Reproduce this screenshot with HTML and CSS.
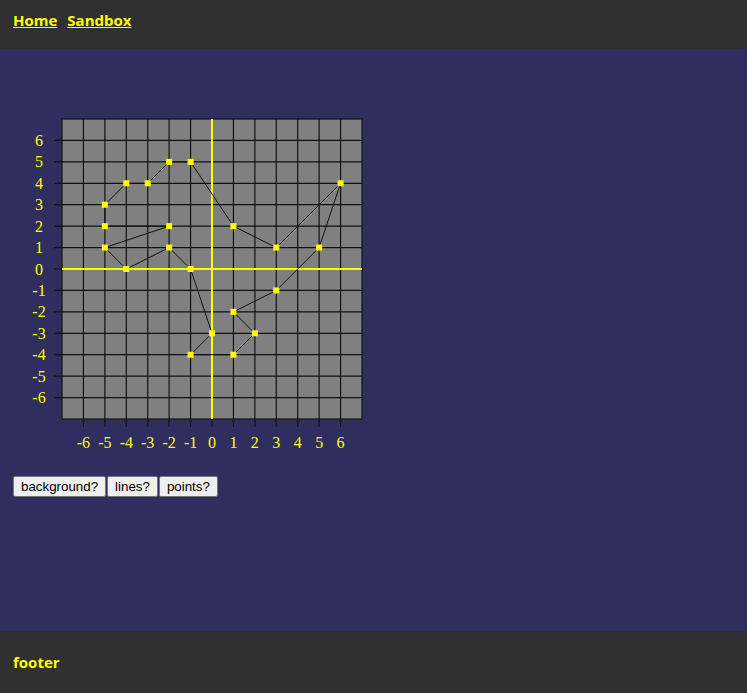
FILE: index.html
```html
<!DOCTYPE html>
<html>
<head>
<meta charset="utf-8">
<link rel="stylesheet" href="styles.css">
</head>
<body>
<header class="topbar">
  <a class="navlink" href="#">Home</a>
  <a class="navlink" href="#">Sandbox</a>
</header>
<main class="content">
  <svg class="plot" width="360" height="360" viewBox="0 0 360 360" xmlns="http://www.w3.org/2000/svg">
    <rect x="49" y="19" width="300" height="300" fill="#808080"/>
    <g class="grid" stroke="#111" stroke-width="1.2" fill="none">
      <line x1="70.43" y1="19" x2="70.43" y2="327"/>
      <line x1="91.86" y1="19" x2="91.86" y2="327"/>
      <line x1="113.29" y1="19" x2="113.29" y2="327"/>
      <line x1="134.71" y1="19" x2="134.71" y2="327"/>
      <line x1="156.14" y1="19" x2="156.14" y2="327"/>
      <line x1="177.57" y1="19" x2="177.57" y2="327"/>
      <line x1="199" y1="19" x2="199" y2="327"/>
      <line x1="220.43" y1="19" x2="220.43" y2="327"/>
      <line x1="241.86" y1="19" x2="241.86" y2="327"/>
      <line x1="263.29" y1="19" x2="263.29" y2="327"/>
      <line x1="284.71" y1="19" x2="284.71" y2="327"/>
      <line x1="306.14" y1="19" x2="306.14" y2="327"/>
      <line x1="327.57" y1="19" x2="327.57" y2="327"/>
      <line x1="41" y1="40.43" x2="349" y2="40.43"/>
      <line x1="41" y1="61.86" x2="349" y2="61.86"/>
      <line x1="41" y1="83.29" x2="349" y2="83.29"/>
      <line x1="41" y1="104.71" x2="349" y2="104.71"/>
      <line x1="41" y1="126.14" x2="349" y2="126.14"/>
      <line x1="41" y1="147.57" x2="349" y2="147.57"/>
      <line x1="41" y1="169" x2="349" y2="169"/>
      <line x1="41" y1="190.43" x2="349" y2="190.43"/>
      <line x1="41" y1="211.86" x2="349" y2="211.86"/>
      <line x1="41" y1="233.29" x2="349" y2="233.29"/>
      <line x1="41" y1="254.71" x2="349" y2="254.71"/>
      <line x1="41" y1="276.14" x2="349" y2="276.14"/>
      <line x1="41" y1="297.57" x2="349" y2="297.57"/>
      <rect x="49" y="19" width="300" height="300"/>
    </g>
    <g stroke="#ffff00" stroke-width="2">
      <line x1="199" y1="19" x2="199" y2="319"/>
      <line x1="49" y1="169" x2="349" y2="169"/>
    </g>
    <g class="labels" fill="#ffff00" text-anchor="middle" dominant-baseline="central">
      <text x="26" y="40.43">6</text>
      <text x="26" y="61.86">5</text>
      <text x="26" y="83.29">4</text>
      <text x="26" y="104.71">3</text>
      <text x="26" y="126.14">2</text>
      <text x="26" y="147.57">1</text>
      <text x="26" y="169">0</text>
      <text x="26" y="190.43">-1</text>
      <text x="26" y="211.86">-2</text>
      <text x="26" y="233.29">-3</text>
      <text x="26" y="254.71">-4</text>
      <text x="26" y="276.14">-5</text>
      <text x="26" y="297.57">-6</text>
    </g>
    <g class="labels" fill="#ffff00" text-anchor="middle">
      <text x="70.43" y="348">-6</text>
      <text x="91.86" y="348">-5</text>
      <text x="113.29" y="348">-4</text>
      <text x="134.71" y="348">-3</text>
      <text x="156.14" y="348">-2</text>
      <text x="177.57" y="348">-1</text>
      <text x="199" y="348">0</text>
      <text x="220.43" y="348">1</text>
      <text x="241.86" y="348">2</text>
      <text x="263.29" y="348">3</text>
      <text x="284.71" y="348">4</text>
      <text x="306.14" y="348">5</text>
      <text x="327.57" y="348">6</text>
    </g>
    <polygon fill="none" stroke="#111" stroke-width="1" points="91.86,104.71 113.29,83.29 134.71,83.29 156.14,61.86 177.57,61.86 220.43,126.14 263.29,147.57 327.57,83.29 306.14,147.57 263.29,190.43 220.43,211.86 241.86,233.29 220.43,254.71 177.57,254.71 199,233.29 177.57,169 156.14,147.57 113.29,169 91.86,147.57 156.14,126.14 91.86,126.14"/>
    <g fill="#ffff00">
      <rect x="88.86" y="101.71" width="6" height="6"/>
      <rect x="110.29" y="80.29" width="6" height="6"/>
      <rect x="131.71" y="80.29" width="6" height="6"/>
      <rect x="153.14" y="58.86" width="6" height="6"/>
      <rect x="174.57" y="58.86" width="6" height="6"/>
      <rect x="217.43" y="123.14" width="6" height="6"/>
      <rect x="260.29" y="144.57" width="6" height="6"/>
      <rect x="324.57" y="80.29" width="6" height="6"/>
      <rect x="303.14" y="144.57" width="6" height="6"/>
      <rect x="260.29" y="187.43" width="6" height="6"/>
      <rect x="217.43" y="208.86" width="6" height="6"/>
      <rect x="238.86" y="230.29" width="6" height="6"/>
      <rect x="217.43" y="251.71" width="6" height="6"/>
      <rect x="174.57" y="251.71" width="6" height="6"/>
      <rect x="196" y="230.29" width="6" height="6"/>
      <rect x="174.57" y="166" width="6" height="6"/>
      <rect x="153.14" y="144.57" width="6" height="6"/>
      <rect x="110.29" y="166" width="6" height="6"/>
      <rect x="88.86" y="144.57" width="6" height="6"/>
      <rect x="153.14" y="123.14" width="6" height="6"/>
      <rect x="88.86" y="123.14" width="6" height="6"/>
    </g>
  </svg>
  <div class="controls"><button class="toggle">background?</button><button class="toggle">lines?</button><button class="toggle">points?</button></div>
</main>
<footer class="bottombar">footer</footer>
</body>
</html>
```
FILE: styles.css
```css
html, body {
  margin: 0;
  padding: 0;
}
body {
  font-family: "Open Sans", "Noto Sans", sans-serif;
  background: #2f2e5f;
}
.topbar {
  box-sizing: border-box;
  height: 49px;
  background: #303030;
  padding: 9px 13px 0;
  line-height: 22px;
  display: flex;
  gap: 10px;
}
.navlink {
  color: #ffff00;
  font-weight: bold;
  font-size: 15px;
  text-decoration: underline;
}
.content {
  box-sizing: border-box;
  height: 582px;
  padding: 51px 13px 0;
  background: #2f2e5f;
}
.plot {
  display: block;
}
.labels {
  font-family: "Liberation Serif", serif;
  font-size: 16px;
}
.controls {
  display: flex;
  gap: 1px;
  margin-top: 16px;
}
.toggle {
  font-family: "Liberation Sans", Arial, sans-serif;
  font-size: 13.33px;
  color: #000;
  background: #efefef;
  border: 1px solid #767676;
  border-radius: 2px;
  padding: 1px 7px;
  height: 21px;
  margin: 0;
}
.bottombar {
  box-sizing: border-box;
  height: 62px;
  background: #303030;
  color: #ffff00;
  font-weight: bold;
  font-size: 15px;
  line-height: 22px;
  padding: 20px 13px 0;
}
```
